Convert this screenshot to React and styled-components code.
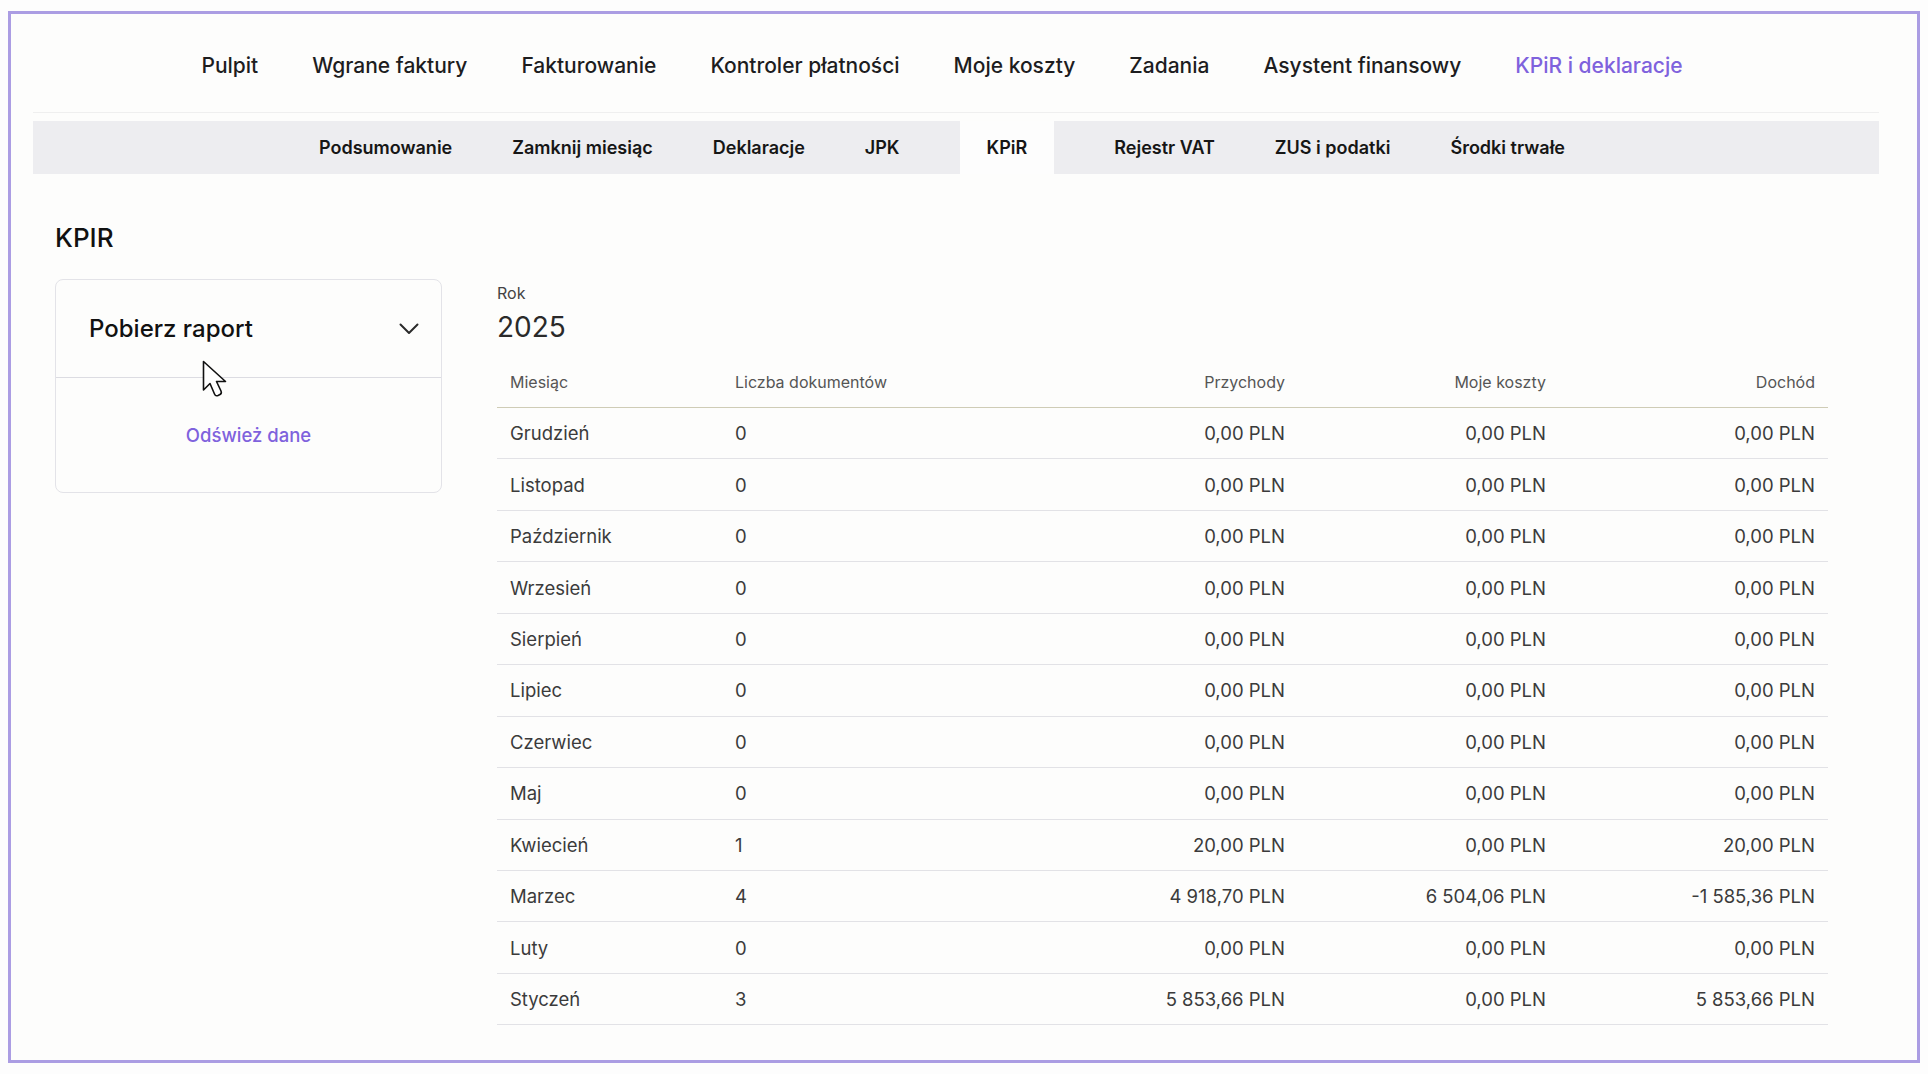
import styled, { createGlobalStyle } from "styled-components";

const GlobalStyle = createGlobalStyle`
  html, body {
    margin: 0;
    padding: 0;
    background: #fdfdfd;
  }
  body {
    font-family: Inter, "Noto Sans", "Liberation Sans", sans-serif;
    color: #1d1d1f;
  }
  * {
    box-sizing: border-box;
  }
`;

const COLORS = {
  frame: "#ab9de3",
  purple: "#7f62dd",
  bar: "#ededf0",
  text: "#1d1d1f",
  cell: "#3b3b3b",
  head: "#555555",
  line: "#e2e2e6",
  headLine: "#cfccb6",
};

const Frame = styled.div`
  margin: 11px 8px 0 8px;
  height: 1052px;
  border: 3px solid ${COLORS.frame};
  background: #fdfdfc;
  display: flex;
  flex-direction: column;
`;

const Navigation = styled.div`
  padding: 0 38px 0 22px;
  display: flex;
  flex-direction: column;
  gap: 8px;
`;

const TopNav = styled.nav`
  height: 99px;
  padding-top: 5px;
  display: flex;
  align-items: center;
  justify-content: center;
  gap: 54px;
  padding-right: 28px;
  border-bottom: 1px solid #efefef;
`;

const TopLink = styled.a`
  font-size: 21px;
  font-weight: 500;
  color: ${(p) => (p.$active ? COLORS.purple : COLORS.text)};
  text-decoration: none;
  cursor: pointer;
  white-space: nowrap;
`;

const SubNav = styled.div`
  height: 53px;
  background: ${COLORS.bar};
  display: flex;
  align-items: stretch;
  justify-content: center;
  padding-right: 28px;
`;

const SubTab = styled.a`
  display: flex;
  align-items: center;
  padding: 0 ${(p) => (p.$active ? "27px" : "30px")};
  margin: 0 ${(p) => (p.$active ? "30px" : "0")};
  background: ${(p) => (p.$active ? "#fdfdfd" : "transparent")};
  font-size: 18px;
  font-weight: 600;
  color: #161616;
  white-space: nowrap;
  cursor: pointer;
`;

const Main = styled.main`
  padding: 48px 89px 0 44px;
  display: flex;
  flex-direction: column;
`;

const Title = styled.h1`
  margin: 0;
  font-size: 26px;
  line-height: 32px;
  font-weight: 500;
  color: #111;
`;

const Columns = styled.div`
  margin-top: 25px;
  display: flex;
  align-items: flex-start;
  gap: 55px;
`;

const Card = styled.div`
  position: relative;
  width: 387px;
  height: 214px;
  border: 1px solid #e3e3e8;
  border-radius: 8px;
  display: flex;
  flex-direction: column;
`;

const CardHeader = styled.button`
  height: 98px;
  border: none;
  border-bottom: 1px solid #dcdce2;
  background: transparent;
  display: flex;
  align-items: center;
  justify-content: space-between;
  padding: 0 22px 0 33px;
  font-family: inherit;
  font-size: 24px;
  font-weight: 500;
  color: #111;
  cursor: pointer;
`;

const CardBody = styled.div`
  flex: 1;
  display: flex;
  align-items: center;
  justify-content: center;
`;

const RefreshLink = styled.a`
  font-size: 18.5px;
  font-weight: 500;
  color: ${COLORS.purple};
  cursor: pointer;
`;

const Pointer = styled.svg`
  position: absolute;
  left: 146px;
  top: 80px;
  width: 26px;
  height: 40px;
  pointer-events: none;
`;

const Report = styled.section`
  flex: 1;
  display: flex;
  flex-direction: column;
`;

const YearLabel = styled.div`
  font-size: 16px;
  line-height: 20px;
  color: #444;
  margin-top: 4px;
`;

const YearValue = styled.div`
  font-size: 28px;
  line-height: 34px;
  color: #2a2a2a;
  margin-top: 7px;
`;

const GRID = "225px 290px 286px 261px 1fr";

const HeadRow = styled.div`
  margin-top: 13px;
  height: 51px;
  display: grid;
  grid-template-columns: ${GRID};
  align-items: center;
  border-bottom: 1px solid ${COLORS.headLine};
`;

const Row = styled.div`
  height: 51.45px;
  display: grid;
  grid-template-columns: ${GRID};
  align-items: center;
  border-bottom: 1px solid ${COLORS.line};
`;

const HeadCell = styled.div`
  padding: 0 13px;
  font-size: 16px;
  color: ${COLORS.head};
  text-align: ${(p) => (p.$right ? "right" : "left")};
`;

const Cell = styled.div`
  padding: 0 13px;
  font-size: 18.5px;
  color: ${COLORS.cell};
  text-align: ${(p) => (p.$right ? "right" : "left")};
  white-space: nowrap;
`;

const topLinks = [
  "Pulpit",
  "Wgrane faktury",
  "Fakturowanie",
  "Kontroler płatności",
  "Moje koszty",
  "Zadania",
  "Asystent finansowy",
  "KPiR i deklaracje",
];

const subTabs = [
  "Podsumowanie",
  "Zamknij miesiąc",
  "Deklaracje",
  "JPK",
  "KPiR",
  "Rejestr VAT",
  "ZUS i podatki",
  "Środki trwałe",
];

const rows = [
  ["Grudzień", "0", "0,00 PLN", "0,00 PLN", "0,00 PLN"],
  ["Listopad", "0", "0,00 PLN", "0,00 PLN", "0,00 PLN"],
  ["Październik", "0", "0,00 PLN", "0,00 PLN", "0,00 PLN"],
  ["Wrzesień", "0", "0,00 PLN", "0,00 PLN", "0,00 PLN"],
  ["Sierpień", "0", "0,00 PLN", "0,00 PLN", "0,00 PLN"],
  ["Lipiec", "0", "0,00 PLN", "0,00 PLN", "0,00 PLN"],
  ["Czerwiec", "0", "0,00 PLN", "0,00 PLN", "0,00 PLN"],
  ["Maj", "0", "0,00 PLN", "0,00 PLN", "0,00 PLN"],
  ["Kwiecień", "1", "20,00 PLN", "0,00 PLN", "20,00 PLN"],
  ["Marzec", "4", "4 918,70 PLN", "6 504,06 PLN", "-1 585,36 PLN"],
  ["Luty", "0", "0,00 PLN", "0,00 PLN", "0,00 PLN"],
  ["Styczeń", "3", "5 853,66 PLN", "0,00 PLN", "5 853,66 PLN"],
];

const Chevron = () => (
  <svg width="20" height="12" viewBox="0 0 20 12" fill="none">
    <path
      d="M1.5 1.5 L10 10 L18.5 1.5"
      stroke="#2b2b2b"
      strokeWidth="2"
      strokeLinecap="round"
      strokeLinejoin="round"
    />
  </svg>
);

const App = () => {
  return (
    <>
      <GlobalStyle />
      <Frame>
        <Navigation>
          <TopNav>
            {topLinks.map((l) => (
              <TopLink key={l} $active={l === "KPiR i deklaracje"}>
                {l}
              </TopLink>
            ))}
          </TopNav>
          <SubNav>
            {subTabs.map((t) => (
              <SubTab key={t} $active={t === "KPiR"}>
                {t}
              </SubTab>
            ))}
          </SubNav>
        </Navigation>
        <Main>
          <Title>KPIR</Title>
          <Columns>
            <Card>
              <CardHeader>
                Pobierz raport
                <Chevron />
              </CardHeader>
              <CardBody>
                <RefreshLink>Odśwież dane</RefreshLink>
              </CardBody>
              <Pointer viewBox="0 0 26 40">
                <path
                  d="M1.5 1.5 L1.5 30 L8 23.5 L12.5 34 Q13.5 36.5 16 35.5 L18 34.5 Q20 33.5 19 31 L14.5 21.5 L23.5 21.5 Z"
                  fill="#fff"
                  stroke="#111"
                  strokeWidth="1.6"
                  strokeLinejoin="round"
                />
              </Pointer>
            </Card>
            <Report>
              <YearLabel>Rok</YearLabel>
              <YearValue>2025</YearValue>
              <HeadRow>
                <HeadCell>Miesiąc</HeadCell>
                <HeadCell>Liczba dokumentów</HeadCell>
                <HeadCell $right>Przychody</HeadCell>
                <HeadCell $right>Moje koszty</HeadCell>
                <HeadCell $right>Dochód</HeadCell>
              </HeadRow>
              {rows.map((r) => (
                <Row key={r[0]}>
                  <Cell>{r[0]}</Cell>
                  <Cell>{r[1]}</Cell>
                  <Cell $right>{r[2]}</Cell>
                  <Cell $right>{r[3]}</Cell>
                  <Cell $right>{r[4]}</Cell>
                </Row>
              ))}
            </Report>
          </Columns>
        </Main>
      </Frame>
    </>
  );
};

export default App;
